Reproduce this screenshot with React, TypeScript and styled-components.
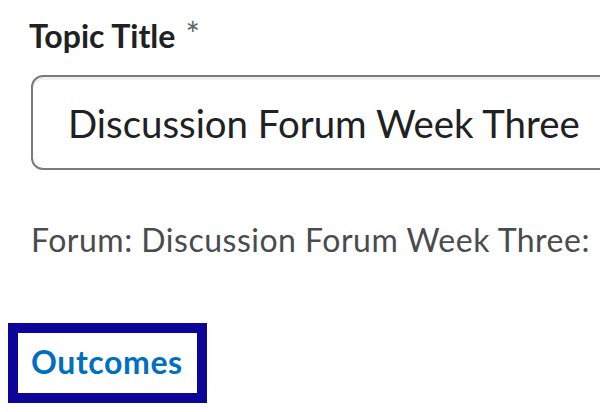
import React from "react";
import styled, { createGlobalStyle } from "styled-components";

const Global = createGlobalStyle`
  html, body { margin: 0; padding: 0; background: #ffffff; }
  body { font-family: Lato, "Noto Sans", sans-serif; overflow: hidden; }
`;

const Page = styled.div`
  width: 600px;
  height: 412px;
  overflow: hidden;
  display: flex;
  flex-direction: column;
  padding: 16px 0 0 31px;
  box-sizing: border-box;
`;

const Label = styled.div`
  margin-left: -2px;
  font-size: 32px;
  font-weight: 700;
  color: #202122;
  line-height: 40px;
  display: flex;
  align-items: flex-start;
  gap: 10px;
`;

const Required = styled.span`
  font-size: 34px;
  font-weight: 400;
  color: #5f6366;
  line-height: 36px;
`;

const Input = styled.div`
  margin-top: 19px;
  width: 640px;
  height: 95px;
  box-sizing: border-box;
  border: 2px solid #787a7d;
  border-radius: 12px;
  box-shadow: inset 0 3px 0 0 #eef0f3;
  display: flex;
  align-items: center;
  padding-left: 35px;
  font-size: 38.4px;
  color: #202122;
  white-space: nowrap;
`;

const Caption = styled.div`
  margin-top: 50px;
  font-size: 32px;
  letter-spacing: 0.5px;
  color: #494c4e;
  line-height: 40px;
  white-space: nowrap;
`;

const FocusBox = styled.div`
  margin-top: 63px;
  margin-left: -23px;
  align-self: flex-start;
  border: 10px solid #0d0499;
  padding: 8px 14px 10px 13px;
`;

const Link = styled.a`
  font-size: 32px;
  font-weight: 700;
  letter-spacing: 0.6px;
  color: #006fbf;
  text-decoration: none;
  line-height: 42px;
  display: block;
`;

export default function App() {
  return (
    <Page>
      <Global />
      <Label>
        Topic Title<Required>*</Required>
      </Label>
      <Input>Discussion Forum Week Three</Input>
      <Caption>Forum: Discussion Forum Week Three:</Caption>
      <FocusBox>
        <Link href="#">Outcomes</Link>
      </FocusBox>
    </Page>
  );
}
